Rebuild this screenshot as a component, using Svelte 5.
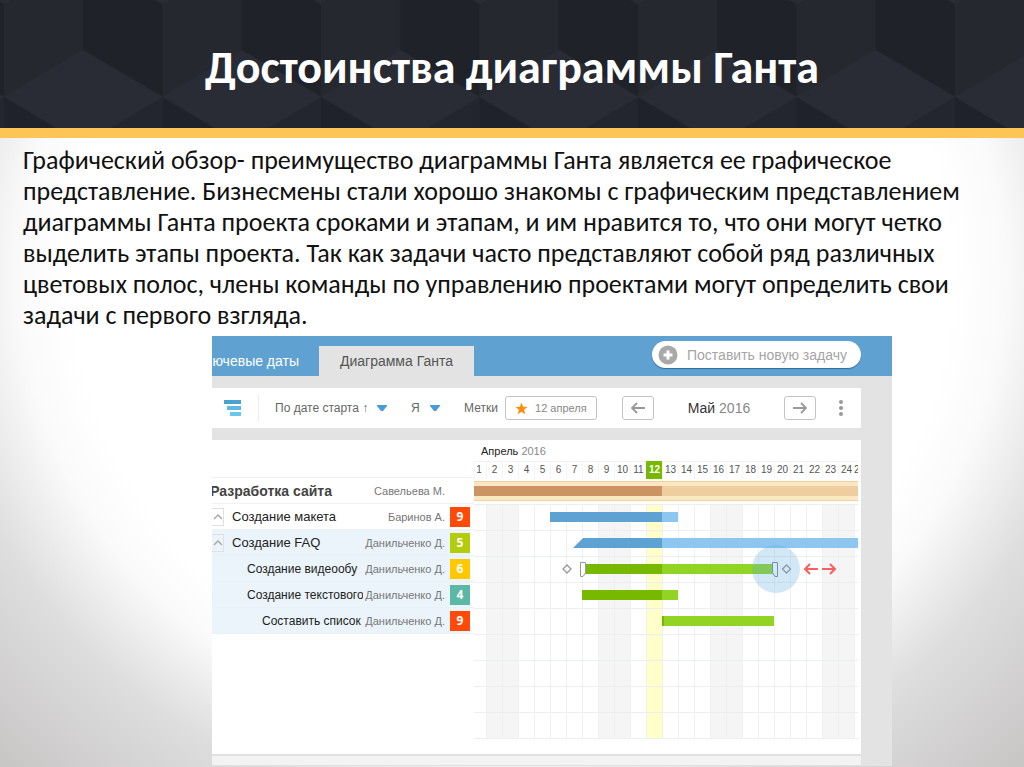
<script>
  const days = Array.from({ length: 25 }, (_, i) => i + 1);
  const weekend = new Set([2, 3, 9, 10, 16, 17, 23, 24]);
  const today = 12;

  const tasks = [
    { name: 'Разработка сайта', who: 'Савельева М.', kind: 'project' },
    { name: 'Создание макета', who: 'Баринов А.', score: 9, color: 'red', level: 1, toggle: true },
    { name: 'Создание FAQ', who: 'Данильченко Д.', score: 5, color: 'lime', level: 1, toggle: true, active: true },
    { name: 'Создание видеообу', who: 'Данильченко Д.', score: 6, color: 'yellow', level: 2, active: true },
    { name: 'Создание текстового', who: 'Данильченко Д.', score: 4, color: 'teal', level: 2, active: true },
    { name: 'Составить список', who: 'Данильченко Д.', score: 9, color: 'red', level: 3, active: true }
  ];

  // Each segment runs from the start of one day to the start of another.
  const rows = [
    [{ from: 1, to: 13, tone: 'brown' }, { from: 13, to: 26, tone: 'sand' }],
    [{ from: 6, to: 13, tone: 'blue' }, { from: 13, to: 14, tone: 'sky' }],
    [{ from: 7, to: 13, tone: 'blue slant' }, { from: 13, to: 26, tone: 'sky' }],
    [{ from: 8, to: 13, tone: 'green' }, { from: 13, to: 20, tone: 'leaf' }],
    [{ from: 8, to: 13, tone: 'green' }, { from: 13, to: 14, tone: 'leaf' }],
    [{ from: 13, to: 20, tone: 'leaf started' }],
    [], [], [], []
  ];
</script>

<div class="page">
  <header>
    <svg class="facets" aria-hidden="true">
      <defs>
        <pattern id="cubes" x="4" y="0" width="158.5" height="144" patternUnits="userSpaceOnUse">
          <rect width="159" height="144" fill="#25282f" />
          <path d="M79 0H159V97L79 50Z" fill="#20222a" />
          <path d="M0 97 79.250 50 158.5 97 79.250 144Z" fill="#2a2c35" />
          <path d="M0 97V144H79Z" fill="#20222b" />
          <path d="M158.500 97V144H79Z" fill="#24262f" />
          <path d="M0 0H7L0 4ZM158.500 0H151L158.500 4Z" fill="#2a2c34" />
        </pattern>
      </defs>
      <rect width="100%" height="100%" fill="url(#cubes)" />
    </svg>
    <h1>Достоинства диаграммы Ганта</h1>
  </header>

  <main>
    <p class="lead">
      Графический обзор- преимущество диаграммы Ганта является ее графическое<br />
      представление. Бизнесмены стали хорошо знакомы с графическим представлением<br />
      диаграммы Ганта проекта сроками и этапам, и им нравится то, что они могут четко<br />
      выделить этапы проекта. Так как задачи часто представляют собой ряд различных<br />
      цветовых полос, члены команды по управлению проектами могут определить свои<br />
      задачи с первого взгляда.
    </p>

    <section class="app">
      <nav>
        <a class="tab first" href="#dates">Ключевые даты</a>
        <a class="tab current" href="#gantt">Диаграмма Ганта</a>
        <button class="create">
          <svg width="20" height="20" viewBox="0 0 20 20" aria-hidden="true">
            <circle cx="10" cy="10" r="9.500" fill="#a9a9a9" />
            <path d="M10 5.500v9M5.500 10h9" stroke="#fff" stroke-width="3" />
          </svg>
          Поставить новую задачу
        </button>
      </nav>

      <div class="toolbar">
        <button class="plain levels" aria-label="Уровни">
          <svg width="18" height="16" viewBox="0 0 18 16">
            <path d="M0 0h17v4H0z" fill="#4aa3cf" />
            <path d="M3 6h14v4H3z" fill="#5cbbe2" />
            <path d="M6 12h11v4H6z" fill="#6cc6ea" />
          </svg>
        </button>
        <label class="pick sort">
          <select aria-label="Сортировка"><option>По дате старта ↑</option></select>
          <svg width="10" height="6" viewBox="0 0 10 6"><path d="M0 0h10v1L6 6H4L0 1Z" fill="#4b9bd5" /></svg>
        </label>
        <label class="pick owner">
          <select aria-label="Сотрудник"><option>Я</option></select>
          <svg width="10" height="6" viewBox="0 0 10 6"><path d="M0 0h10v1L6 6H4L0 1Z" fill="#4b9bd5" /></svg>
        </label>
        <span class="marks">Метки</span>
        <button class="box mark">
          <svg width="13" height="13" viewBox="0 0 14 13" aria-hidden="true">
            <path d="M7 0 8.700 4.600 13.600 4.800 9.700 7.900 11.100 12.600 7 9.900 2.900 12.600 4.300 7.900.400 4.800 5.300 4.600Z" fill="#ff8c0a" />
          </svg>
          12 апреля
        </button>
        <button class="box step prev" aria-label="Назад">
          <svg width="14" height="12" viewBox="0 0 14 12"><path d="M14 6H1M6 1 1 6l5 5" fill="none" stroke="#999" stroke-width="1.800" /></svg>
        </button>
        <span class="month"><b>Май</b> 2016</span>
        <button class="box step" aria-label="Вперёд">
          <svg width="14" height="12" viewBox="0 0 14 12"><path d="M0 6h13M8 1l5 5-5 5" fill="none" stroke="#999" stroke-width="1.800" /></svg>
        </button>
        <button class="plain more" aria-label="Ещё">
          <svg width="6" height="16" viewBox="0 0 6 16" fill="#999">
            <circle cx="3" cy="2" r="2" /><circle cx="3" cy="8" r="2" /><circle cx="3" cy="14" r="2" />
          </svg>
        </button>
      </div>

      <div class="board">
        <table>
          <colgroup><col class="c-name" /><col class="c-who" /><col class="c-score" /></colgroup>
          <tbody>
            {#each tasks as t}
              <tr class:active={t.active} class:project={t.kind === 'project'}>
                <td class="name level{t.level ?? 0}">
                  <div>
                    {#if t.toggle}
                      <button class="fold" aria-label="Свернуть">
                        <svg width="10" height="6" viewBox="0 0 10 6"><path d="M1 5l4-4 4 4" fill="none" stroke="#aaa" stroke-width="1.500" /></svg>
                      </button>
                    {/if}
                    <span>{t.name}</span>
                  </div>
                </td>
                <td class="who">{t.who}</td>
                <td class="score">{#if t.score}<span class={t.color}>{t.score}</span>{/if}</td>
              </tr>
            {/each}
          </tbody>
        </table>

        <div class="chart">
          <div class="title"><b>Апрель</b> 2016</div>
          <div class="days">
            {#each days as d}<span class:now={d === today}>{d}</span>{/each}
          </div>
          <div class="canvas">
            <div class="columns">
              {#each days as d}<i class:off={weekend.has(d)} class:now={d === today}></i>{/each}
            </div>
            <div class="rows">
              {#each rows as segments, i}
                <div class="row" class:band={i === 0}>
                  {#each segments as s}
                    <span class="bar {s.tone}" style="grid-column: {s.from} / {s.to}"></span>
                  {/each}
                  {#if i === 3}
                    <svg class="handles" width="278" height="48" viewBox="0 0 278 48" fill="none" aria-hidden="true">
                      <path d="M1 24 5 20 9 24 5 28Z" stroke="#999" stroke-width="1.300" />
                      <path d="M18.500 17.500H23.500V28L21 31.500H18.500Z" fill="#fff" stroke="#999" />
                      <path d="M210.500 17.500h5v14h-2.500L210.500 27.500Z" fill="#fff" stroke="#888" />
                      <circle cx="214" cy="24" r="24" fill="#5faee3" fill-opacity=".28" />
                      <path d="M220.500 24l4-4 4 4-4 4Z" stroke="#8d9aa5" stroke-width="1.300" />
                      <path d="M256 24h-13m5-5-5 5 5 5M260 24h13m-5-5 5 5-5 5" stroke="#fa5f60" stroke-width="2" />
                    </svg>
                  {/if}
                </div>
              {/each}
            </div>
          </div>
        </div>
      </div>
      <div class="foot"></div>
    </section>
  </main>
</div>

<style>
  :global(body) { margin: 0; }
  * { box-sizing: border-box; }
  button, select { font: inherit; color: inherit; padding: 0; margin: 0; border: 0; background: none; }
  svg { display: block; flex: none; }

  .page {
    min-height: 100vh;
    display: flex;
    flex-direction: column;
    font-family: "Liberation Sans", Arial, sans-serif;
  }
  header {
    position: relative;
    height: 138px;
    border-bottom: 10px solid #fdc556;
    background: #25282f;
    display: flex;
    justify-content: center;
    align-items: center;
  }
  .facets { position: absolute; inset: 0; width: 100%; height: 100%; }
  h1 {
    position: relative;
    margin: 0;
    padding-top: 6px;
    color: #fff;
    font: 700 46px/52px Carlito, Lato, sans-serif;
    white-space: nowrap;
  }
  main {
    flex: 1;
    background: radial-gradient(ellipse 58% 88% at 50% 22%, #fff 74%, #fafafa 83%, #dedede 98%, #c4c0c0 128%);
  }
  .lead {
    margin: 0;
    padding: 7px 23px 5px;
    color: #111;
    font: 400 26px/31px Carlito, Lato, sans-serif;
    white-space: nowrap;
  }

  .app {
    margin: 0 132px 0 212px;
    padding-right: 31px;
    background: #e3e3e3;
    color: #555;
    overflow: hidden;
  }
  nav {
    display: flex;
    align-items: flex-end;
    height: 40px;
    margin-right: -31px;
    padding-right: 31px;
    background: #5fa2d2;
  }
  .tab {
    height: 30px;
    padding: 0 20px;
    display: flex;
    align-items: center;
    color: #fff;
    font-size: 14px;
    white-space: nowrap;
    text-decoration: none;
  }
  .first { width: 107px; justify-content: flex-end; overflow: hidden; }
  .current { width: 155px; padding: 0; justify-content: center; background: #e3e3e3; color: #555; }
  .create {
    display: flex;
    align-items: center;
    gap: 9px;
    width: 209px;
    height: 27px;
    margin: 0 0 8px auto;
    padding-left: 6px;
    border-radius: 14px;
    background: #fff;
    box-shadow: 0 1px 1px #2f6f9c;
    color: #a5a5a5;
    font-size: 14px;
    white-space: nowrap;
  }

  .toolbar {
    display: flex;
    align-items: center;
    height: 40px;
    margin: 12px 0;
    padding-right: 17px;
    background: #fff;
    font-size: 12px;
    color: #666;
    white-space: nowrap;
  }
  .levels { width: 47px; height: 28px; padding-left: 12px; border-right: 1px solid #eee; }
  .pick { display: flex; align-items: center; justify-content: space-between; }
  .pick select { appearance: none; outline: 0; }
  .sort { width: 112px; margin-left: 16px; }
  .owner { width: 29px; margin-left: 24px; }
  .marks { margin-left: 24px; }
  .box { display: flex; align-items: center; justify-content: center; height: 24px; border: 1px solid #c4c4c4; border-radius: 3px; }
  .mark { gap: 7px; width: 92px; margin-left: 7px; font-size: 11px; color: #888; }
  .step { width: 32px; }
  .prev { margin-left: auto; }
  .month { width: 130px; text-align: center; font-size: 14px; color: #888; }
  .month b { font-weight: 400; color: #333; }
  .more { margin-left: 22px; }

  .board { display: flex; align-items: flex-start; background: #fff; padding: 0 3px 15px 0; }
  table { flex: none; width: 262px; margin-top: 37px; table-layout: fixed; border-collapse: collapse; border-top: 1px solid #f0f0f0; }
  .c-name { width: 151px; }
  .c-who { width: 82px; }
  .c-score { width: 29px; }
  tr { height: 26px; }
  .active { background: linear-gradient(90deg, #ebf4fa 258px, #fff 258px); }
  td { padding: 0; border-bottom: 1px solid #f0f2f4; line-height: 20px; }
  .active td { border-color: #e9f2f8; }
  .name div { display: flex; align-items: center; overflow: hidden; white-space: nowrap; font-size: 13px; color: #222; }
  .level1 div { gap: 8px; }
  .level2 div { padding-left: 35px; font-size: 12px; }
  .level3 div { padding-left: 50px; font-size: 12px; }
  .project .name div { justify-content: flex-end; padding-right: 31px; font-size: 14px; font-weight: 700; color: #444; }
  .fold { display: flex; align-items: center; justify-content: center; flex: none; width: 12px; height: 18px; border: 1px solid #e0e0e0; border-left: 0; }
  .who { text-align: right; font-size: 11px; color: #777; white-space: nowrap; }
  .score span {
    display: block;
    width: 20px;
    margin-left: 5px;
    text-align: center;
    color: #fff;
    font: 700 12px/20px "Open Sans", sans-serif;
  }
  .red { background: #ff4a0a; }
  .lime { background: #b3cc0b; }
  .yellow { background: #ffc800; }
  .teal { background: #5ab8a4; }

  .chart { flex: 1; min-width: 0; overflow: hidden; }
  .title { height: 21px; padding-left: 7px; font-size: 11px; line-height: 22px; color: #888; }
  .title b { font-weight: 400; color: #222; }
  .days, .columns, .row { display: grid; grid-template-columns: 12px repeat(24, 16px); }
  .days { height: 18px; }
  .days span { display: flex; justify-content: center; border-left: 1px solid #f5f5f5; border-top: 1px solid #f2f2f2; font-size: 10px; line-height: 16px; color: #555; }
  .days span:first-child { padding-right: 3px; }
  .days span:last-child { justify-content: flex-start; border-left: 0; }
  .days .now { background: #76b900; color: #fff; font-weight: 700; border-color: #76b900; }
  .canvas { display: grid; }
  .columns, .rows { grid-area: 1 / 1; }
  .columns i { border-left: 1px solid #f0f0f0; }
  .columns i:first-child { border-left: 0; }
  .columns .off { background: #f5f5f5; }
  .columns .now { background: #ffffc8; }
  .row { position: relative; height: 26px; border-bottom: 1px solid #ecefef; }
  .band { background: linear-gradient(#fff 2px, #f0d0a0 2px, #f0d0a0 3px, #fde6c2 3px, #fde6c2 21px, #f0d0a0 21px, #f0d0a0 22px, #fff 22px); }
  .bar { height: 10px; margin-top: 7px; }
  .brown { background: #cb9462; }
  .sand { background: #eecd9f; }
  .blue { background: #5da2d3; }
  .sky { background: #8dc6ee; }
  .green { background: #76b900; }
  .leaf { background: #92d424; }
  .started { border-left: 2px solid #76b900; }
  .slant { margin-left: 7px; clip-path: polygon(0 100%, 10px 0, 100% 0, 100% 100%); }
  .handles { position: absolute; left: 88px; top: -12px; z-index: 1; }
  .foot { height: 12px; border: solid #e0e0e0; border-width: 2px 0 1px; background: #f3f3f3; }
</style>
